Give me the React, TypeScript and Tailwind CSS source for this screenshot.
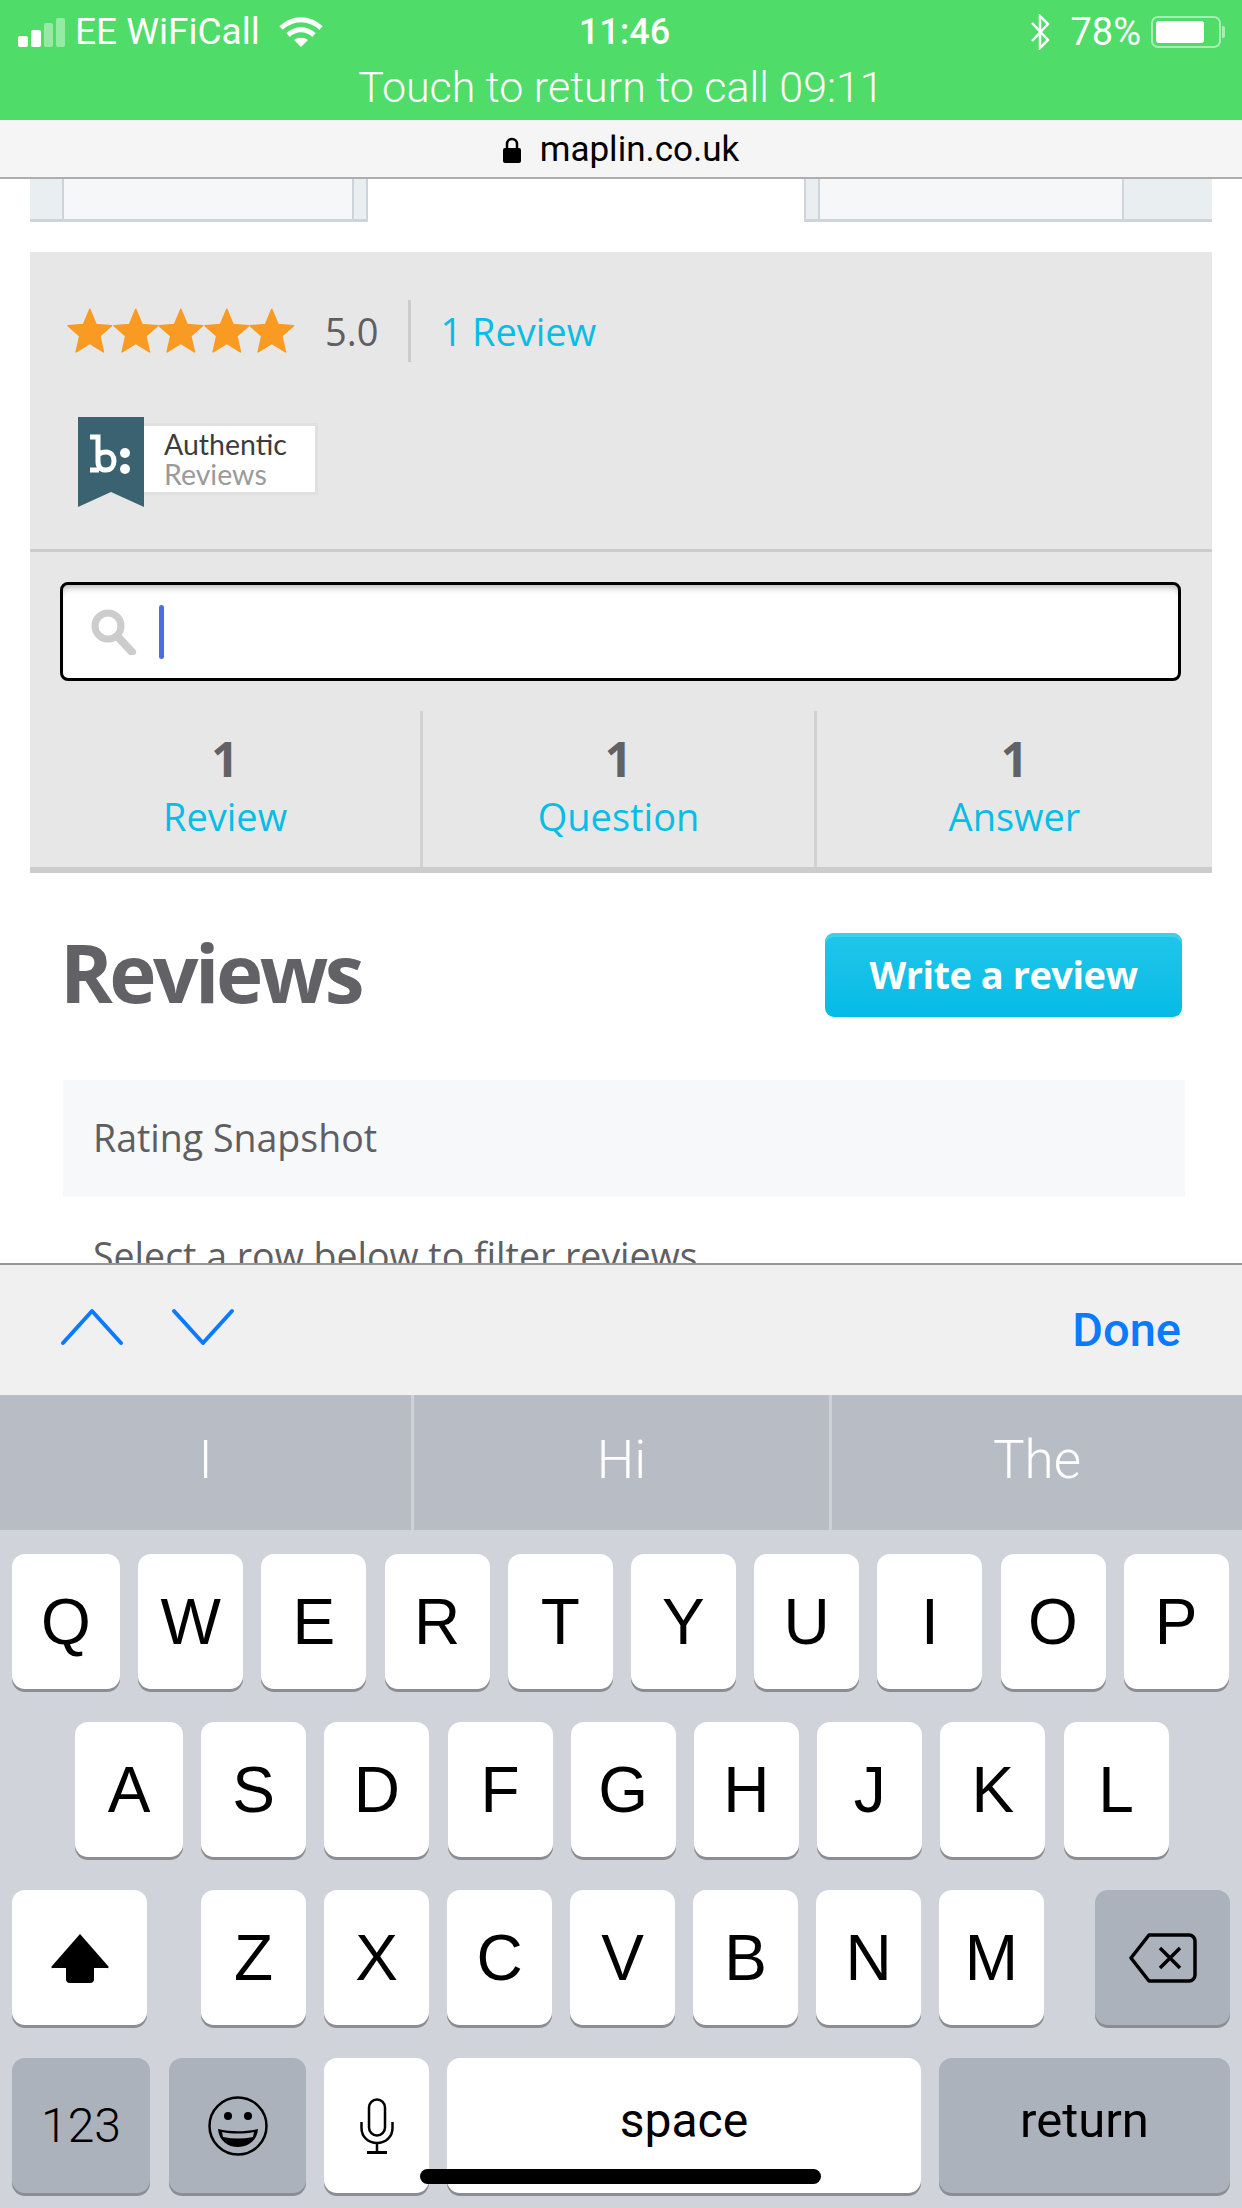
import React from 'react';

const ROW_ONE = ['Q', 'W', 'E', 'R', 'T', 'Y', 'U', 'I', 'O', 'P'];
const ROW_TWO = ['A', 'S', 'D', 'F', 'G', 'H', 'J', 'K', 'L'];
const ROW_THREE = ['Z', 'X', 'C', 'V', 'B', 'N', 'M'];

function Key({ className = '', dark = false, children }: { className?: string; dark?: boolean; children: React.ReactNode }) {
  return (
    <div
      className={`flex items-center justify-center rounded-[13px] text-black shadow-[0_3px_0_#8b8d92] ${dark ? 'bg-[#abb2bc]' : 'bg-white'} ${className}`}
    >
      {children}
    </div>
  );
}

function LetterKey({ letter, wide = false }: { letter: string; wide?: boolean }) {
  return (
    <Key className={`h-[135px] shrink-0 font-['Liberation_Sans',sans-serif] text-[64px] ${wide ? 'w-[108px]' : 'w-[105px]'}`}>
      {letter}
    </Key>
  );
}

function Star() {
  return (
    <svg viewBox="0 0 46 46" className="h-[46px] w-[45.6px]">
      <path
        d="M23 1l6.4 15.4 15.6 1.3-11.8 10.4 3.6 16L23 35.6 9.2 44.1l3.6-16L1 17.7l15.6-1.3z"
        fill="#f99a22"
        stroke="#f99a22"
        strokeWidth="1.5"
        strokeLinejoin="round"
      />
    </svg>
  );
}

function StatusBar() {
  return (
    <div className="h-[120px] shrink-0 bg-[#4fdc68] font-['Roboto',sans-serif] text-white">
      <div className="flex h-[60px] items-center justify-between pl-[18px] pr-[17px] pt-[3px]">
        <div className="flex w-[330px] items-center">
          <div className="flex h-[30px] items-end gap-[3px]">
            <div className="h-[11px] w-[10px] rounded-[2px] bg-white" />
            <div className="h-[17px] w-[10px] rounded-[2px] bg-white" />
            <div className="h-[24px] w-[9px] rounded-[2px] bg-white/40" />
            <div className="h-[29px] w-[9px] rounded-[2px] bg-white/40" />
          </div>
          <span className="ml-[10px] text-[37px] leading-none">EE WiFiCall</span>
          <svg viewBox="0 0 44 30" className="ml-[19px] h-[30px] w-[44px]" fill="none" stroke="#fff" strokeWidth="5">
            <path d="M2 11c12-11 28-11 40 0" />
            <path d="M9 18c8-7 18-7 26 0" />
            <path d="M22 30l-7-7c4-3 10-3 14 0z" fill="#fff" stroke="none" />
          </svg>
        </div>
        <span className="ml-[6px] text-[36px] font-medium leading-none">11:46</span>
        <div className="flex w-[330px] items-center justify-end">
          <svg viewBox="0 0 20 36" className="h-[36px] w-[20px]" fill="none" stroke="#fff" strokeWidth="2.5">
            <path d="M2 9l16 17-8 8V2l8 8L2 27" />
          </svg>
          <span className="ml-[20px] text-[38px] leading-none">78%</span>
          <div className="ml-[10px] flex items-center">
            <div className="h-[32px] w-[70px] rounded-[7px] border-2 border-white/50 p-[3px]">
              <div className="h-full w-[80%] rounded-[3px] bg-white" />
            </div>
            <div className="ml-[1px] h-[12px] w-[3px] rounded-r-[2px] bg-white/50" />
          </div>
        </div>
      </div>
      <div className="flex h-[52px] items-center justify-center pt-[2px] text-[43px] font-light leading-none">
        Touch to return to call 09:11
      </div>
    </div>
  );
}

function UrlBar() {
  return (
    <div className="flex h-[59px] shrink-0 items-center justify-center border-b-2 border-[#aeaeae] bg-[#f5f5f5] pt-[3px] font-['Roboto',sans-serif] text-[35px] text-black">
      <svg viewBox="0 0 18 26" className="mr-[19px] h-[26px] w-[18px]">
        <path d="M4 12V7a5 5 0 0110 0v5" fill="none" stroke="#000" strokeWidth="2.5" />
        <rect x="0" y="11" width="18" height="15" rx="2" fill="#000" />
      </svg>
      maplin.co.uk
    </div>
  );
}

function Thumbnails() {
  return (
    <div className="flex h-[43px] justify-between pl-[30px] pr-[30px]">
      <div className="flex w-[338px] border-b-[3px] border-r-2 border-[#cdd5da] bg-[#e9eef1] pl-[32px] pr-[12px]">
        <div className="flex-1 border-x-2 border-[#cdd5da] bg-[#f5f7f9]" />
      </div>
      <div className="flex w-[408px] border-b-[3px] border-l-2 border-[#cdd5da] bg-[#e9eef1] pl-[12px] pr-[88px]">
        <div className="flex-1 border-x-2 border-[#cdd5da] bg-[#f5f7f9]" />
      </div>
    </div>
  );
}

function ReviewSummary() {
  return (
    <div className="mx-[30px] mt-[30px] bg-[#e7e7e7] font-['Open_Sans',sans-serif]">
      <div className="h-[300px] border-b-[3px] border-[#cccccc] pl-[37px] pt-[48px]">
        <div className="flex h-[62px] items-center">
          <div className="flex">
            <Star />
            <Star />
            <Star />
            <Star />
            <Star />
          </div>
          <span className="ml-[30px] text-[38px] text-[#5e5e63]">5.0</span>
          <div className="ml-[30px] h-[62px] w-[3px] bg-[#cccccc]" />
          <a className="ml-[29px] text-[38px] text-[#07bde6]">1 Review</a>
        </div>
        <div className="ml-[11px] mt-[55px] flex items-start">
          <svg viewBox="0 0 66 90" className="h-[90px] w-[66px] shrink-0">
            <path d="M0 0h66v90L33 75 0 90z" fill="#3b6270" />
            <path d="M12 20h8v25c0 5 3 8 8 8s8-4 8-9-3-9-8-9c-3 0-6 1-8 3v-3M12 53h9" fill="none" stroke="#fff" strokeWidth="5" />
            <circle cx="47" cy="36" r="5" fill="#fff" />
            <circle cx="47" cy="52" r="5" fill="#fff" />
          </svg>
          <div className="mt-[6px] flex h-[72px] w-[174px] flex-col justify-center border-[3px] border-l-0 border-[#e0e0e0] bg-white pl-[20px] font-['Lato',sans-serif] text-[28.5px] leading-[30px]">
            <span className="text-[#3c3c3c]">Authentic</span>
            <span className="text-[#9a9a9a]">Reviews</span>
          </div>
        </div>
      </div>

      <div className="mx-[30px] mt-[30px] flex h-[99px] w-[1121px] items-center rounded-[8px] border-[3px] border-black bg-white pl-[28px] shadow-[inset_0_7px_6px_-4px_#bdbdbd]">
        <svg viewBox="0 0 46 46" className="h-[46px] w-[46px]" fill="none" stroke="#cccccc">
          <circle cx="17" cy="17" r="13" strokeWidth="7" />
          <path d="M27 28l14 15" strokeWidth="8" strokeLinecap="round" />
        </svg>
        <div className="ml-[22px] h-[54px] w-[5px] rounded-full bg-[#4a6ee8]" />
      </div>

      <div className="mt-[30px] grid h-[162px] grid-cols-[393px_394px_395px] border-b-[6px] border-[#cccccc] text-center">
        {['Review', 'Question', 'Answer'].map((label, idx) => (
          <div key={label} className={`pt-[15px] ${idx < 2 ? 'border-r-[3px] border-[#d2d2d2]' : ''}`}>
            <div className="text-[48px] font-bold leading-[66px] text-[#616166]">1</div>
            <div className="text-[38px] leading-[48px] text-[#07bde6]">{label}</div>
          </div>
        ))}
      </div>
    </div>
  );
}

function ReviewsBlock() {
  return (
    <div className="font-['Open_Sans',sans-serif]">
      <div className="mt-[60px] flex h-[84px] items-center justify-between pl-[60px] pr-[60px]">
        <h2 className="-mt-[7px] text-[80px] font-bold tracking-[-3.5px] text-[#616166]">Reviews</h2>
        <button className="flex h-[84px] w-[357px] items-center justify-center rounded-[9px] bg-gradient-to-b from-[#1fc6ea] to-[#03bbe5] pb-[2px] text-[38px] font-bold tracking-[-0.5px] text-white shadow-[inset_0_4px_0_#3fcfee]">
          Write a review
        </button>
      </div>
      <div className="ml-[63px] mr-[57px] mt-[63px] flex h-[117px] items-center bg-[#f7f8fa] px-[30px] text-[37.5px] text-[#5e5e63]">
        Rating Snapshot
      </div>
      <div className="ml-[93px] mt-[34px] text-[37.5px] leading-[50px] text-[#5e5e63]">
        Select a row below to filter reviews
      </div>
    </div>
  );
}

function Toolbar() {
  return (
    <div className="flex h-[132px] shrink-0 items-center justify-between border-t-2 border-[#979797] bg-[#f0f0f1] pl-[60px] pr-[61px] font-['Roboto',sans-serif]">
      <div className="-mt-[6px] flex gap-[47px]">
        <svg viewBox="0 0 64 38" className="h-[38px] w-[64px]" fill="none" stroke="#0a7aff" strokeWidth="4" strokeLinecap="round" strokeLinejoin="round">
          <path d="M3 35L32 3l29 32" />
        </svg>
        <svg viewBox="0 0 64 38" className="h-[38px] w-[64px]" fill="none" stroke="#0a7aff" strokeWidth="4" strokeLinecap="round" strokeLinejoin="round">
          <path d="M3 3l29 32L61 3" />
        </svg>
      </div>
      <span className="text-[47px] font-medium text-[#0a7aff]">Done</span>
    </div>
  );
}

function Keyboard() {
  return (
    <div className="relative h-[813px] shrink-0 bg-[#d0d3da] font-['Roboto',sans-serif]">
      <div className="grid h-[135px] grid-cols-[414px_418px_1fr] bg-[#b8bcc5] text-center text-[53px] font-light leading-[130px] text-white">
        <div className="border-r-[3px] border-[#cfd1d6]">I</div>
        <div className="border-r-[3px] border-[#cfd1d6]">Hi</div>
        <div>The</div>
      </div>

      <div className="mt-[24px] flex gap-[18.2px] pl-[12px]">
        {ROW_ONE.map((k, idx) => (
          <LetterKey key={k} letter={k} wide={idx === 0} />
        ))}
      </div>

      <div className="mt-[33px] flex gap-[18.2px] pl-[75px]">
        {ROW_TWO.map((k, idx) => (
          <LetterKey key={k} letter={k} wide={idx === 0} />
        ))}
      </div>

      <div className="mt-[33px] flex items-start px-[12px]">
        <Key className="h-[135px] w-[135px]">
          <svg viewBox="0 0 58 50" className="h-[50px] w-[58px]">
            <path d="M29 1L57 33a1 1 0 01-1 2H43v11a4 4 0 01-4 4H19a4 4 0 01-4-4V35H2a1 1 0 01-1-2z" fill="#000" />
          </svg>
        </Key>
        <div className="ml-[54px] flex gap-[18px]">
          {ROW_THREE.map((k) => (
            <LetterKey key={k} letter={k} />
          ))}
        </div>
        <Key dark className="ml-[51px] h-[135px] w-[135px]">
          <svg viewBox="0 0 68 50" className="h-[50px] w-[68px]" fill="none" stroke="#000" strokeWidth="3.5">
            <path d="M20 2h40a6 6 0 016 6v34a6 6 0 01-6 6H20L2 25z" strokeLinejoin="round" />
            <path d="M31 15l20 20M51 15L31 35" />
          </svg>
        </Key>
      </div>

      <div className="mt-[33px] flex items-start px-[12px]">
        <Key dark className="h-[135px] w-[138px] text-[48px] font-light">
          123
        </Key>
        <Key dark className="ml-[19px] h-[135px] w-[137px]">
          <svg viewBox="0 0 60 60" className="h-[60px] w-[60px]">
            <ellipse cx="30" cy="30" rx="28.5" ry="28.5" fill="none" stroke="#000" strokeWidth="2.5" />
            <circle cx="20" cy="20" r="4" fill="#000" />
            <circle cx="40" cy="20" r="4" fill="#000" />
            <path d="M10 33c13 3 27 3 40 0-1 12-10 18-20 18S11 45 10 33z" fill="#000" />
            <path d="M14 36c10 2 22 2 32 0l-1 5c-10 2-20 2-30 0z" fill="#abb2bc" />
          </svg>
        </Key>
        <Key className="ml-[18px] h-[135px] w-[105px]">
          <svg viewBox="0 0 34 56" className="h-[56px] w-[34px]" fill="none" stroke="#000" strokeWidth="2.5">
            <rect x="9" y="1.5" width="16" height="36" rx="8" />
            <path d="M1.5 24v6c0 9 7 15 15.5 15s15.5-6 15.5-15v-6M17 45v9" />
            <path d="M7 54.5h20" strokeWidth="3" />
          </svg>
        </Key>
        <Key className="ml-[18px] h-[135px] w-[474px] text-[48px]">
          <span className="-translate-y-[5px]">space</span>
        </Key>
        <Key dark className="ml-[18px] h-[135px] w-[291px] text-[49px]">
          <span className="-translate-y-[5px]">return</span>
        </Key>
      </div>

      {/* home indicator sits over the bottom row */}
      <div className="absolute bottom-[24px] left-[420px] h-[15px] w-[401px] rounded-full bg-black" />
    </div>
  );
}

export default function App() {
  return (
    <div className="flex h-[2208px] w-[1242px] flex-col overflow-hidden bg-white">
      <StatusBar />
      <UrlBar />
      <div className="h-[1084px] shrink-0 overflow-hidden">
        <Thumbnails />
        <ReviewSummary />
        <ReviewsBlock />
      </div>
      <Toolbar />
      <Keyboard />
    </div>
  );
}
